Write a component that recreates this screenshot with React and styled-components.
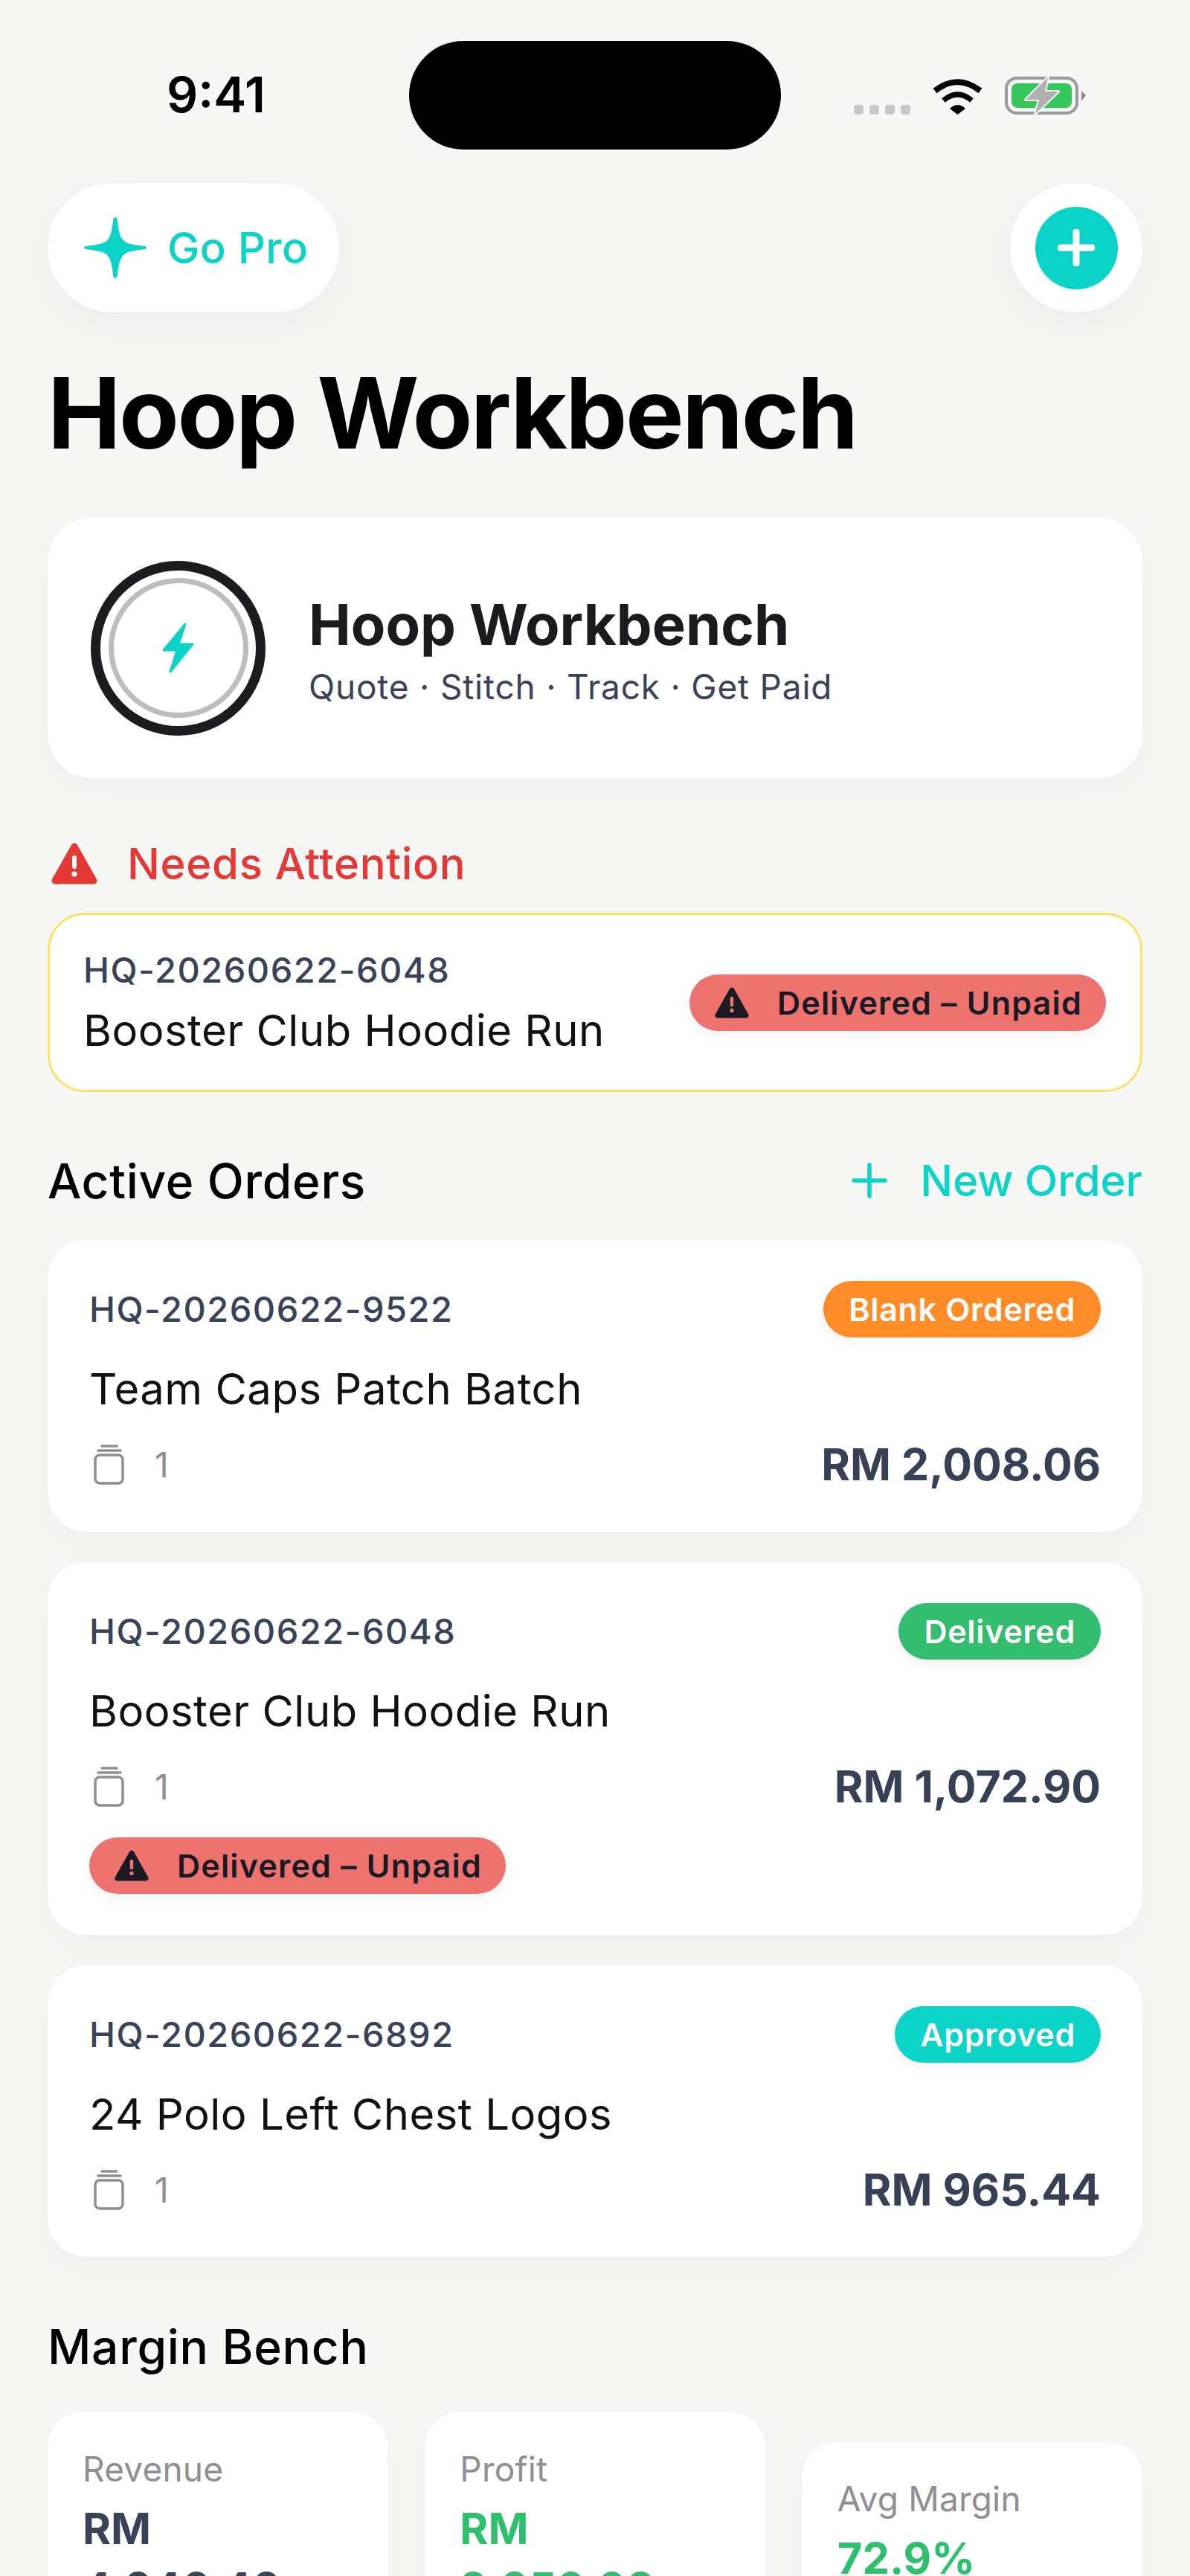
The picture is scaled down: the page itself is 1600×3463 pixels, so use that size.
import React from "react";
import styled, { createGlobalStyle } from "styled-components";

const teal = "#0bd3c7";
const slate = "#3a4257";
const grey = "#8e8e93";
const green = "#2fc06e";

const GlobalStyle = createGlobalStyle`
  html, body {
    margin: 0;
    padding: 0;
    background: #f7f7f5;
  }
  body {
    font-family: Inter, "Noto Sans", sans-serif;
    color: #000;
  }
  * {
    box-sizing: border-box;
  }
`;

const Page = styled.div`
  width: 1600px;
  height: 3463px;
  overflow: hidden;
  background: #f7f7f5;
`;

const StatusBar = styled.div`
  display: grid;
  grid-template-columns: 326px 500px 1fr;
  align-items: start;
  padding: 55px 0 0 224px;
`;

const Clock = styled.div`
  font-size: 66px;
  font-weight: 600;
  line-height: 80px;
  margin-top: 32px;
`;

const Island = styled.div`
  height: 146px;
  background: #000;
  border-radius: 73px;
`;

const StatusIcons = styled.div`
  display: flex;
  align-items: flex-end;
  padding: 48px 0 0 98px;
`;

const SignalDots = styled.div`
  display: flex;
  gap: 8px;
  margin-right: 30px;
  span {
    width: 13px;
    height: 13px;
    border-radius: 4px;
    background: #c8c8c8;
  }
`;

const Content = styled.div`
  padding: 0 64px;
`;

const TopRow = styled.div`
  display: flex;
  justify-content: space-between;
  margin-top: 45px;
`;

const GoPro = styled.div`
  display: flex;
  align-items: center;
  gap: 27px;
  width: 392px;
  height: 174px;
  padding-left: 48px;
  background: #fff;
  border-radius: 87px;
  box-shadow: 0 16px 60px rgba(0, 0, 0, 0.05);
  color: ${teal};
  font-size: 58px;
  font-weight: 500;
  letter-spacing: 0.3px;
`;

const AddButton = styled.div`
  display: flex;
  align-items: center;
  justify-content: center;
  width: 178px;
  height: 174px;
  background: #fff;
  border-radius: 50%;
  box-shadow: 0 16px 60px rgba(0, 0, 0, 0.05);
`;

const AddCircle = styled.div`
  display: flex;
  align-items: center;
  justify-content: center;
  width: 111px;
  height: 111px;
  background: ${teal};
  border-radius: 50%;
`;

const PageTitle = styled.h1`
  margin: 65px 0 0;
  font-size: 132px;
  font-weight: 700;
  line-height: 140px;
  letter-spacing: -2.5px;
`;

const Hero = styled.div`
  display: flex;
  align-items: center;
  gap: 58px;
  height: 350px;
  margin-top: 71px;
  padding-left: 58px;
  background: #fff;
  border-radius: 60px;
  box-shadow: 0 12px 50px rgba(0, 0, 0, 0.04);
`;

const RingOuter = styled.div`
  display: flex;
  align-items: center;
  justify-content: center;
  width: 235px;
  height: 235px;
  border: 13px solid #1b1b20;
  border-radius: 50%;
`;

const RingInner = styled.div`
  display: flex;
  align-items: center;
  justify-content: center;
  width: 188px;
  height: 188px;
  border: 7px solid #bdbdbd;
  border-radius: 50%;
`;

const HeroText = styled.div`
  margin-top: 4px;
`;

const HeroTitle = styled.div`
  font-size: 76px;
  font-weight: 700;
  line-height: 90px;
  color: #1a1a1f;
`;

const HeroSub = styled.div`
  margin-top: 10px;
  font-size: 46px;
  line-height: 58px;
  color: ${slate};
  letter-spacing: 0.8px;
`;

const AttentionHead = styled.div`
  display: flex;
  align-items: center;
  gap: 40px;
  height: 56px;
  margin-top: 87px;
  padding-left: 5px;
  font-size: 58px;
  font-weight: 550;
  letter-spacing: 0.7px;
  color: #e53935;
`;

const AlertCard = styled.div`
  display: flex;
  align-items: center;
  justify-content: space-between;
  height: 241px;
  margin-top: 38px;
  padding: 0 46px 0 45px;
  background: #fff;
  border: 3px solid #ffe066;
  border-radius: 50px;
`;

const OrderId = styled.div`
  font-size: 47px;
  font-weight: 500;
  line-height: 58px;
  letter-spacing: 1.5px;
  color: ${slate};
`;

const OrderName = styled.div`
  margin-top: ${(p) => p.$gap || 0}px;
  font-size: 58px;
  line-height: 70px;
  letter-spacing: 0.5px;
  color: #111;
`;

const Badge = styled.div`
  display: inline-flex;
  align-items: center;
  gap: ${(p) => (p.$warn ? 38 : 0)}px;
  height: 76px;
  padding: 0 ${(p) => (p.$warn ? 32 : 34)}px 0 34px;
  border-radius: 38px;
  background: ${(p) => p.$bg};
  color: ${(p) => (p.$warn ? "#1a1a24" : "#fff")};
  font-size: 43px;
  font-weight: 600;
  letter-spacing: ${(p) => (p.$warn ? 1.2 : 0.7)}px;
  box-shadow: 0 6px 20px rgba(0, 0, 0, 0.05);
`;

const SectionHead = styled.div`
  display: flex;
  align-items: center;
  justify-content: space-between;
  height: 78px;
  margin-top: ${(p) => p.$top}px;
  padding-bottom: ${(p) => p.$lift || 0}px;
`;

const SectionTitle = styled.h2`
  margin: 0;
  font-size: 64px;
  font-weight: 550;
  letter-spacing: 0.7px;
`;

const NewOrder = styled.div`
  display: flex;
  align-items: center;
  gap: 43px;
  font-size: 58px;
  font-weight: 500;
  color: ${teal};
`;

const OrderList = styled.div`
  display: flex;
  flex-direction: column;
  gap: 41px;
  margin-top: 39px;
`;

const OrderCard = styled.div`
  padding: 55px 56px 55px 56px;
  background: #fff;
  border-radius: 52px;
  box-shadow: 0 12px 50px rgba(0, 0, 0, 0.04);
`;

const CardTop = styled.div`
  display: flex;
  align-items: center;
  justify-content: space-between;
`;

const CardMeta = styled.div`
  display: flex;
  align-items: center;
  justify-content: space-between;
  height: 70px;
  margin-top: 32px;
`;

const Qty = styled.div`
  display: flex;
  align-items: center;
  gap: 41px;
  padding-left: 6px;
  font-size: 46px;
  color: ${grey};
`;

const Price = styled.div`
  font-size: 59px;
  font-weight: 700;
  line-height: 70px;
  color: #374054;
`;

const ExtraBadge = styled.div`
  margin-top: 33px;
`;

const StatGrid = styled.div`
  display: grid;
  grid-template-columns: repeat(3, 1fr);
  gap: 50px;
  align-items: center;
  margin-top: 50px;
`;

const StatCard = styled.div`
  padding: 46px 47px;
  background: #fff;
  border-radius: 46px;
  box-shadow: 0 12px 50px rgba(0, 0, 0, 0.03);
`;

const StatLabel = styled.div`
  font-size: 46px;
  line-height: 60px;
  letter-spacing: 0.2px;
  color: ${grey};
`;

const StatValue = styled.div`
  margin-top: 10px;
  font-size: 58px;
  font-weight: 700;
  line-height: 80px;
  color: ${(p) => p.$color};
`;

const Sparkle = () => (
  <svg width="86" height="84" viewBox="0 0 86 84" fill={teal}>
    <path d="M43 1C44.5 1 45.5 2 45.8 4C47.5 20 49 26 53 31C57 36 63 37.5 82 40C84 40.3 85 41 85 42C85 43 84 43.7 82 44C63 46.5 57 48 53 53C49 58 47.5 64 45.8 80C45.5 82 44.5 83 43 83C41.5 83 40.5 82 40.2 80C38.5 64 37 58 33 53C29 48 23 46.5 4 44C2 43.7 1 43 1 42C1 41 2 40.3 4 40C23 37.5 29 36 33 31C37 26 38.5 20 40.2 4C40.5 2 41.5 1 43 1Z" />
  </svg>
);

const Plus = ({ size, weight, color }) => (
  <svg width={size} height={size} viewBox="0 0 50 50" stroke={color} strokeWidth={weight} strokeLinecap="round">
    <path d="M25 4V46M4 25H46" />
  </svg>
);

const Bolt = () => (
  <svg width="43" height="68" viewBox="0 0 43 68" fill={teal} stroke={teal} strokeWidth="3" strokeLinejoin="round">
    <path d="M31 2L2 37H20L11 66L41 29H22Z" />
  </svg>
);

const Warning = ({ width, height, color, mark }) => (
  <svg width={width} height={height} viewBox="0 0 62 56">
    <path d="M31 5L57 51H5Z" fill={color} stroke={color} strokeWidth="9" strokeLinejoin="round" />
    <rect x="28" y="17" width="6" height="18" rx="3" fill={mark} />
    <circle cx="31" cy="42" r="3.6" fill={mark} />
  </svg>
);

const Wifi = () => (
  <svg width="67" height="49" viewBox="0 0 67 49" fill="none" stroke="#000">
    <path d="M3 17Q33.5 -6.5 64 17" strokeWidth="8" />
    <path d="M14.5 30Q33.5 14 52.5 30" strokeWidth="7" />
    <path d="M23 41Q33.5 31 44 41L33.5 49Z" fill="#000" stroke="none" />
  </svg>
);

const BatteryIcon = styled.svg`
  margin-left: 30px;
`;

const Battery = () => (
  <BatteryIcon width="109" height="51" viewBox="0 0 109 51">
    <rect x="2" y="2" width="95" height="47" rx="14" fill="none" stroke="#9a9a9a" strokeWidth="4" />
    <rect x="9" y="9" width="81" height="33" rx="8" fill="#34c759" />
    <path d="M103 19L109 25L103 33Z" fill="#8a8a8a" />
    <path d="M58 1L28 31H46L41 50L72 20H54Z" fill="#b0b0b0" stroke="#f7f7f5" strokeWidth="4" strokeLinejoin="round" paintOrder="stroke" />
  </BatteryIcon>
);

const Cup = () => (
  <svg width="41" height="54" viewBox="0 0 41 54" fill="none" stroke={grey} strokeWidth="3.5" strokeLinecap="round">
    <rect x="2" y="14" width="37" height="38" rx="6" />
    <path d="M6 8H36M11 2H31" />
  </svg>
);

const UnpaidBadge = () => (
  <Badge $warn $bg="#ee736f">
    <Warning width={46} height={42} color="#1a1a24" mark="#ee736f" />
    Delivered – Unpaid
  </Badge>
);

const orders = [
  { id: "HQ-20260622-9522", name: "Team Caps Patch Batch", status: "Blank Ordered", bg: "#ff8c28", price: "RM 2,008.06" },
  { id: "HQ-20260622-6048", name: "Booster Club Hoodie Run", status: "Delivered", bg: "#33bd6e", price: "RM 1,072.90", unpaid: true },
  { id: "HQ-20260622-6892", name: "24 Polo Left Chest Logos", status: "Approved", bg: teal, price: "RM 965.44" },
];

const stats = [
  { label: "Revenue", value: "RM 4,046.40", color: slate },
  { label: "Profit", value: "RM 2,950.08", color: green },
  { label: "Avg Margin", value: "72.9%", color: green },
];

export default function App() {
  return (
    <Page>
      <GlobalStyle />
      <StatusBar>
        <Clock>9:41</Clock>
        <Island />
        <StatusIcons>
          <SignalDots>
            <span /><span /><span /><span />
          </SignalDots>
          <Wifi />
          <Battery />
        </StatusIcons>
      </StatusBar>
      <Content>
        <TopRow>
          <GoPro>
            <Sparkle />
            Go Pro
          </GoPro>
          <AddButton>
            <AddCircle>
              <Plus size={50} weight={9} color="#fff" />
            </AddCircle>
          </AddButton>
        </TopRow>
        <PageTitle>Hoop Workbench</PageTitle>

        <Hero>
          <RingOuter>
            <RingInner>
              <Bolt />
            </RingInner>
          </RingOuter>
          <HeroText>
            <HeroTitle>Hoop Workbench</HeroTitle>
            <HeroSub>Quote · Stitch · Track · Get Paid</HeroSub>
          </HeroText>
        </Hero>

        <AttentionHead>
          <Warning width={62} height={56} color="#e53935" mark="#fff" />
          Needs Attention
        </AttentionHead>
        <AlertCard>
          <div>
            <OrderId>HQ-20260622-6048</OrderId>
            <OrderName $gap={17}>Booster Club Hoodie Run</OrderName>
          </div>
          <UnpaidBadge />
        </AlertCard>

        <SectionHead $top={82} $lift={4}>
          <SectionTitle>Active Orders</SectionTitle>
          <NewOrder>
            <Plus size={50} weight={5.5} color={teal} />
            New Order
          </NewOrder>
        </SectionHead>
        <OrderList>
          {orders.map((o) => (
            <OrderCard key={o.id}>
              <CardTop>
                <OrderId>{o.id}</OrderId>
                <Badge $bg={o.bg}>{o.status}</Badge>
              </CardTop>
              <OrderName $gap={34}>{o.name}</OrderName>
              <CardMeta>
                <Qty>
                  <Cup />
                  1
                </Qty>
                <Price>{o.price}</Price>
              </CardMeta>
              {o.unpaid && (
                <ExtraBadge>
                  <UnpaidBadge />
                </ExtraBadge>
              )}
            </OrderCard>
          ))}
        </OrderList>

        <SectionHead $top={81}>
          <SectionTitle>Margin Bench</SectionTitle>
        </SectionHead>
        <StatGrid>
          {stats.map((s) => (
            <StatCard key={s.label}>
              <StatLabel>{s.label}</StatLabel>
              <StatValue $color={s.color}>{s.value}</StatValue>
            </StatCard>
          ))}
        </StatGrid>
      </Content>
    </Page>
  );
}
